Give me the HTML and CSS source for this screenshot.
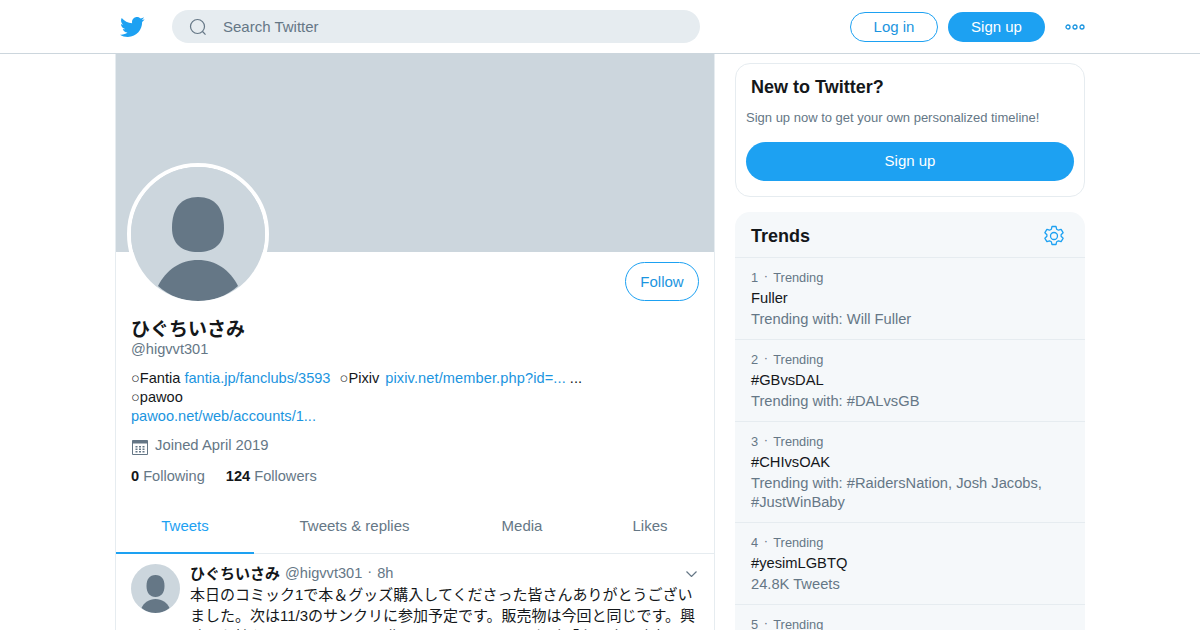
FILE: index.html
```html
<!DOCTYPE html>
<html lang="ja">

<head>
    <meta charset="UTF-8">
    <link rel="stylesheet" href="styles.css">
    <title>ひぐちいさみ (@higvvt301) on Twitter</title>
</head>

<body>
    <header class="topbar">
        <div class="topbar-inner">
            <svg class="logo" viewBox="0 0 24 24">
                <path d="M23.643 4.937c-.835.37-1.732.62-2.675.733.962-.576 1.7-1.49 2.048-2.578-.9.534-1.897.922-2.958 1.13-.85-.904-2.06-1.47-3.4-1.47-2.572 0-4.658 2.086-4.658 4.66 0 .364.042.718.12 1.06-3.873-.195-7.304-2.05-9.602-4.868-.4.69-.63 1.49-.63 2.342 0 1.616.823 3.043 2.072 3.878-.764-.025-1.482-.234-2.11-.583v.06c0 2.257 1.605 4.14 3.737 4.568-.392.106-.803.162-1.227.162-.3 0-.593-.028-.877-.082.593 1.85 2.313 3.198 4.352 3.234-1.595 1.25-3.604 1.995-5.786 1.995-.376 0-.747-.022-1.112-.065 2.062 1.323 4.51 2.093 7.14 2.093 8.57 0 13.255-7.098 13.255-13.254 0-.2-.005-.402-.014-.602.91-.658 1.7-1.477 2.323-2.41z" />
            </svg>
            <div class="search">
                <svg class="search-icon" viewBox="0 0 20 20">
                    <circle cx="9.500" cy="9.500" r="7" />
                    <path d="M14.500 14.500l3 3.200" />
                </svg>
                <span>Search Twitter</span>
            </div>
            <div class="topbar-actions">
                <a class="btn btn-outline btn-login">Log in</a>
                <a class="btn btn-solid btn-signup">Sign up</a>
                <svg class="more" viewBox="0 0 20 6">
                    <circle cx="3" cy="3" r="2" />
                    <circle cx="10" cy="3" r="2" />
                    <circle cx="17" cy="3" r="2" />
                </svg>
            </div>
        </div>
    </header>

    <div class="page">
        <main class="profile">
            <div class="banner"></div>
            <div class="profile-head">
                <div class="avatar">
                    <svg viewBox="0 0 134 134">
                        <rect width="134" height="134" fill="#ccd6dd" />
                        <path d="M67 30c17 0 26 11 26 31 0 16-10 24-26 24s-26-8-26-24c0-20 9-31 26-31z" fill="#657786" />
                        <path d="M27 119c8-16 22-26 40-26s32 10 40 26c-11 10-25 15-40 15s-29-5-40-15z" fill="#657786" />
                    </svg>
                </div>
                <a class="btn btn-outline btn-follow">Follow</a>
            </div>
            <div class="bio">
                <h1 class="name">ひぐちいさみ</h1>
                <div class="handle">@higvvt301</div>
                <p class="desc">○Fantia <a>fantia.jp/fanclubs/3593</a> &nbsp;<span class="desc-pixiv">○Pixiv</span> <a class="desc-pixiv-link">pixiv.net/member.php?id=...</a> ...<br>○pawoo<br><a>pawoo.net/web/accounts/1...</a></p>
                <div class="joined">
                    <svg viewBox="0 0 18 18">
                        <path class="cal-line" d="M1.500 2.500h15v14h-15z" />
                        <path class="cal-dots" d="M1.500 2.500h15v3h-15zM4.500 8h2v1.500h-2zM8 8h2v1.500H8zM11.500 8h2v1.500h-2zM4.500 10.500h2V12h-2zM8 10.500h2V12H8zM11.500 10.500h2V12h-2zM4.500 13h2v1.500h-2zM8 13h2v1.500H8zM11.500 13h2v1.500h-2z" />
                    </svg>
                    <span>Joined April 2019</span>
                </div>
                <div class="stats">
                    <span><b>0</b> Following</span>
                    <span><b>124</b> Followers</span>
                </div>
            </div>
            <nav class="tabs">
                <a class="tab active">Tweets</a>
                <a class="tab tab-replies">Tweets &amp; replies</a>
                <a class="tab tab-media">Media</a>
                <a class="tab tab-likes">Likes</a>
            </nav>
            <article class="tweet">
                <svg class="tweet-avatar" viewBox="0 0 49 49">
                    <rect width="49" height="49" fill="#ccd6dd" />
                    <path d="M24.500 11c6 0 9 4 9 11 0 7-3.500 11-9 11s-9-4-9-11c0-7 3-11 9-11z" fill="#657786" />
                    <path d="M10.500 44c2.500-5.500 7.500-9 14-9s11.500 3.500 14 9c-4 3.500-9 5-14 5s-10-1.500-14-5z" fill="#657786" />
                </svg>
                <div class="tweet-body">
                    <div class="tweet-meta">
                        <b>ひぐちいさみ</b>
                        <span class="tweet-handle">@higvvt301</span>
                        <span class="tweet-dot">·</span>
                        <span class="tweet-handle">8h</span>
                        <svg class="caret" viewBox="0 0 11 6">
                            <path d="M.5.500l5 5 5-5" />
                        </svg>
                    </div>
                    <p class="tweet-text">本日のコミック1で本＆グッズ購入してくださった皆さんありがとうございました。次は11/3のサンクリに参加予定です。販売物は今回と同じです。興味をお持ちくださるかたは是非いらしてください。部誌「主要本」宣伝</p>
                </div>
            </article>
        </main>

        <aside class="side">
            <section class="card signup-card">
                <h2>New to Twitter?</h2>
                <p>Sign up now to get your own personalized timeline!</p>
                <a class="btn btn-solid btn-wide">Sign up</a>
            </section>
            <section class="card trends">
                <div class="trends-head">
                    <h2>Trends</h2>
                    <svg viewBox="0 0 24 24">
                        <path d="M10 2.500h4l.7 2.800 1.700.9 2.700-.9 2 3.400-2 2v1.600l2 2-2 3.400-2.700-.9-1.700.9-.7 2.800h-4l-.7-2.800-1.700-.9-2.700.9-2-3.400 2-2v-1.600l-2-2 2-3.400 2.700.9 1.700-.9z" />
                        <circle cx="12" cy="12" r="3.500" />
                    </svg>
                </div>
                <div class="trend">
                    <div class="trend-rank">1 <i>·</i> Trending</div>
                    <div class="trend-name">Fuller</div>
                    <div class="trend-info">Trending with: Will Fuller</div>
                </div>
                <div class="trend">
                    <div class="trend-rank">2 <i>·</i> Trending</div>
                    <div class="trend-name">#GBvsDAL</div>
                    <div class="trend-info">Trending with: #DALvsGB</div>
                </div>
                <div class="trend">
                    <div class="trend-rank">3 <i>·</i> Trending</div>
                    <div class="trend-name">#CHIvsOAK</div>
                    <div class="trend-info">Trending with: #RaidersNation, Josh Jacobs, #JustWinBaby</div>
                </div>
                <div class="trend">
                    <div class="trend-rank">4 <i>·</i> Trending</div>
                    <div class="trend-name">#yesimLGBTQ</div>
                    <div class="trend-info">24.8K Tweets</div>
                </div>
                <div class="trend">
                    <div class="trend-rank">5 <i>·</i> Trending</div>
                </div>
            </section>
        </aside>
    </div>
</body>

</html>
```
FILE: styles.css
```css
:root {
    --font: "Liberation Sans", "Noto Sans CJK JP", sans-serif;
    --blue: #1da1f2;
    --link: #1b95e0;
    --grey: #657786;
    --line: #e6ecf0;
}

html,
body {
    margin: 0;
    height: 630px;
    overflow: hidden;
}

body {
    background-color: #fff;
    color: #14171a;
    font-family: var(--font);
    font-size: 15px;
}

h1,
h2,
p {
    margin: 0;
}

.topbar {
    height: 53px;
    border-bottom: 1px solid #ccd6dd;
}

.topbar-inner {
    display: flex;
    align-items: center;
    height: 53px;
    padding: 0 115px 0 119px;
}

.logo {
    width: 26px;
    height: 26px;
    fill: var(--blue);
    margin-right: 27px;
}

.search {
    display: flex;
    align-items: center;
    width: 528px;
    height: 33px;
    border-radius: 17px;
    background-color: var(--line);
    color: var(--grey);
    font-size: 15px;
}

.search-icon {
    width: 20px;
    height: 20px;
    margin: 0 15px 0 16px;
    fill: none;
    stroke: var(--grey);
    stroke-width: 1.200;
}

.topbar-actions {
    display: flex;
    align-items: center;
    margin-left: auto;
}

.btn {
    display: flex;
    align-items: center;
    justify-content: center;
    box-sizing: border-box;
    font-size: 15px;
}

.btn-outline {
    border: 1px solid var(--blue);
    color: var(--link);
    background-color: #fff;
}

.btn-solid {
    background-color: var(--blue);
    color: #fff;
}

.btn-login {
    width: 88px;
    height: 30px;
    border-radius: 15px;
    margin-right: 10px;
}

.btn-signup {
    width: 97px;
    height: 30px;
    border-radius: 15px;
    margin-right: 20px;
}

.more {
    width: 20px;
    height: 6px;
    fill: none;
    stroke: var(--link);
    stroke-width: 1.300;
}

.page {
    display: flex;
    align-items: flex-start;
    padding-left: 115px;
}

.profile {
    box-sizing: border-box;
    width: 600px;
    height: 577px;
    border-left: 1px solid var(--line);
    border-right: 1px solid var(--line);
    overflow: hidden;
}

.banner {
    height: 198px;
    background-color: #ccd6dd;
}

.profile-head {
    position: relative;
    display: flex;
    justify-content: flex-end;
    height: 56px;
    padding: 10px 15px 0 0;
}

.avatar {
    position: absolute;
    left: 11px;
    top: -89px;
    width: 134px;
    height: 134px;
    border: 4px solid #fff;
    border-radius: 50%;
    overflow: hidden;
}

.avatar svg {
    display: block;
    width: 134px;
    height: 134px;
}

.btn-follow {
    width: 74px;
    height: 39px;
    border-radius: 20px;
}

.bio {
    padding: 0 15px;
}

.name {
    font-size: 19px;
    font-weight: 700;
    line-height: 24px;
}

.handle {
    color: var(--grey);
    line-height: 19px;
    font-size: 14.600px;
    margin-top: -2px;
}

.desc {
    margin-top: 10px;
    line-height: 19px;
    font-size: 14.600px;
}

.desc a {
    color: var(--link);
}

.desc-pixiv {
    margin-left: 1px;
}

.desc-pixiv-link {
    margin-left: 2px;
    letter-spacing: 0.1px;
}

.joined {
    display: flex;
    align-items: center;
    gap: 6px;
    margin-top: 7px;
    color: var(--grey);
    line-height: 20px;
    font-size: 14.800px;
}

.joined svg {
    width: 18px;
    height: 18px;
    margin-top: 5px;
}

.cal-line {
    fill: none;
    stroke: var(--grey);
}

.cal-dots {
    fill: var(--grey);
}

.stats {
    display: flex;
    gap: 21px;
    margin-top: 10px;
    color: var(--grey);
    line-height: 20px;
    font-size: 14.600px;
}

.stats b {
    color: #14171a;
}

.tabs {
    display: flex;
    height: 52px;
    margin-top: 15px;
    border-bottom: 1px solid var(--line);
}

.tab {
    display: flex;
    align-items: center;
    justify-content: center;
    box-sizing: border-box;
    width: 138px;
    height: 53px;
    padding-bottom: 3px;
    border-bottom: 2px solid transparent;
    color: var(--grey);
    font-size: 15px;
}

.tab.active {
    color: var(--blue);
    border-bottom-color: var(--blue);
}

.tab-replies {
    width: 201px;
}

.tab-media {
    width: 134px;
}

.tab-likes {
    width: 122px;
}

.tweet {
    display: flex;
    gap: 10px;
    padding: 10px 15px 0;
}

.tweet-avatar {
    flex: none;
    width: 49px;
    height: 49px;
    border-radius: 50%;
}

.tweet-body {
    flex: 1;
    min-width: 0;
}

.tweet-meta {
    display: flex;
    align-items: center;
    gap: 5px;
    height: 19px;
    margin-top: -1px;
    color: var(--grey);
    font-size: 14.600px;
}

.tweet-meta b {
    color: #14171a;
    font-size: 15px;
}

.tweet-dot {
    margin-bottom: 4px;
}

.caret {
    width: 11px;
    height: 6px;
    margin: 2px 2px 0 auto;
    fill: none;
    stroke: var(--grey);
    stroke-width: 1.200;
}

.tweet-text {
    margin-top: 2px;
    line-height: 21px;
    font-size: 15px;
}

.side {
    width: 350px;
    margin-left: 20px;
    padding-top: 9px;
}

.card {
    box-sizing: border-box;
    border-radius: 15px;
}

.signup-card {
    height: 134px;
    padding: 12px 10px 0;
    border: 1px solid var(--line);
}

.signup-card h2 {
    margin-left: 5px;
    font-size: 18px;
    line-height: 22px;
}

.signup-card p {
    margin-top: 11px;
    color: var(--grey);
    font-size: 13px;
    line-height: 18px;
}

.btn-wide {
    height: 39px;
    margin-top: 15px;
    padding-bottom: 2px;
    border-radius: 20px;
}

.trends {
    margin-top: 15px;
    background-color: #f5f8fa;
}

.trends-head {
    display: flex;
    align-items: center;
    justify-content: space-between;
    box-sizing: border-box;
    height: 46px;
    padding: 2px 19px 0 16px;
    border-bottom: 1px solid var(--line);
}

.trends-head h2 {
    margin-top: 2px;
    font-size: 18px;
}

.trends-head svg {
    width: 24px;
    height: 24px;
    fill: none;
    stroke: var(--blue);
    stroke-width: 1.300;
    stroke-linejoin: round;
}

.trend {
    padding: 10px 16px 10px;
    border-bottom: 1px solid var(--line);
}

.trend-rank {
    color: var(--grey);
    font-size: 12.800px;
    line-height: 19px;
}

.trend-rank i {
    font-style: normal;
    margin: 0 2px;
    line-height: 0;
    vertical-align: 2px;
}

.trend-name {
    margin-top: 1px;
    font-size: 14.700px;
    line-height: 20px;
}

.trend-info {
    margin-top: 2px;
    color: var(--grey);
    font-size: 14.700px;
    line-height: 19px;
}
```
